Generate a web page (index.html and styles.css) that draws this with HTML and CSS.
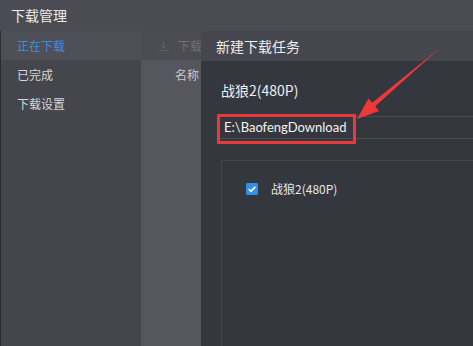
FILE: index.html
```html
<!DOCTYPE html>
<html lang="zh-CN">
<head>
<meta charset="utf-8">
<title>下载管理</title>
<link rel="stylesheet" href="styles.css">
</head>
<body>
<div class="app">
  <div class="titlebar">下载管理</div>
  <div class="main">
    <div class="sidebar">
      <div class="nav-item active">正在下载</div>
      <div class="nav-item">已完成</div>
      <div class="nav-item">下载设置</div>
    </div>
    <div class="midcol">
      <div class="mid-head">
        <svg class="dl-icon" width="11" height="10" viewBox="0 0 11 10"><path d="M5.5 0 V7 M2.5 4.5 L5.5 7.5 L8.5 4.5 M0.5 9.5 H10.5" fill="none" stroke="#5f6068" stroke-width="1"/></svg>
        <span>下载</span>
      </div>
      <div class="mid-row">名称</div>
    </div>
    <div class="dialog">
      <div class="dialog-head">新建下载任务</div>
      <div class="dialog-body">
        <div class="task-name">战狼2(480P)</div>
        <div class="path-input">E:\BaofengDownload<span class="mark"></span></div>
        <div class="file-panel">
          <label class="file-item"><span class="check"><svg width="12" height="12" viewBox="0 0 12 12"><path d="M2.8 6.2 L5 8.3 L9.3 3.8" fill="none" stroke="#fff" stroke-width="1.7"/></svg></span><span>战狼2(480P)</span></label>
        </div>
      </div>
    </div>
  </div>
  <svg class="arrow" width="473" height="346" viewBox="0 0 473 346"><polygon points="357,119 368.5,98.6 372.2,102.8 440.5,47.5 375.2,106.3 379,111" fill="#f0383a"/></svg>
</div>
</body>
</html>
```

FILE: styles.css
```css
html, body {
  margin: 0;
  padding: 0;
  background: #35373f;
}
body {
  font-family: "Noto Sans CJK SC", "Noto Sans", sans-serif;
  width: 473px;
  height: 346px;
  overflow: hidden;
}
.app {
  position: relative;
  width: 473px;
  height: 346px;
  overflow: hidden;
  display: flex;
  flex-direction: column;
}
.titlebar {
  height: 31px;
  flex: none;
  background: #4b4b53;
  color: #ececec;
  font-size: 14px;
  line-height: 30px;
  padding-left: 11px;
  box-sizing: border-box;
}
.main {
  flex: 1;
  display: flex;
  min-height: 0;
}
.sidebar {
  width: 141px;
  flex: none;
  background: #45454e;
  border-left: 1px solid #2c2c31;
  box-sizing: border-box;
}
.nav-item {
  height: 29px;
  line-height: 29px;
  font-size: 12px;
  color: #d6d6d8;
  padding-left: 16px;
}
.nav-item.active {
  background: #4e4f57;
  color: #3a8ee0;
}
.midcol {
  width: 60px;
  flex: none;
  display: flex;
  flex-direction: column;
  background: #56565e;
}
.mid-head {
  height: 29px;
  flex: none;
  background: #4c4c55;
  display: flex;
  align-items: center;
  padding-left: 17px;
  gap: 9px;
  font-size: 12px;
  color: #6e6f77;
  white-space: nowrap;
  overflow: hidden;
}
.dl-icon {
  flex: none;
}
.mid-row {
  height: 30px;
  line-height: 30px;
  font-size: 12px;
  color: #c8c8cc;
  padding-left: 34px;
  white-space: nowrap;
  overflow: hidden;
}
.dialog {
  flex: 1;
  display: flex;
  flex-direction: column;
  background: #35373f;
  min-width: 0;
}
.dialog-head {
  height: 30px;
  flex: none;
  background: #45464e;
  color: #eeeeee;
  font-size: 14px;
  line-height: 30px;
  padding-left: 15px;
  box-sizing: border-box;
}
.dialog-body {
  flex: 1;
  padding: 19px 0 0 20px;
  display: flex;
  flex-direction: column;
}
.task-name {
  font-size: 14px;
  line-height: 20px;
  color: #f0f0f0;
}
.path-input {
  position: relative;
  margin: 16px 0 0 -3px;
  height: 23px;
  border-top: 1px solid #4b4d56;
  border-bottom: 1px solid #4b4d56;
  box-sizing: border-box;
  font-family: "Lato", "Noto Sans", sans-serif;
  font-size: 13px;
  line-height: 21px;
  color: #f2f2f2;
  padding-left: 6px;
  margin-right: -20px;
}
.mark {
  position: absolute;
  left: -1px;
  top: -3px;
  width: 139px;
  height: 30px;
  border: 3px solid #e83a3b;
  box-sizing: border-box;
}
.file-panel {
  margin-top: 21px;
  flex: 1;
  border-top: 1px solid #45474f;
  border-left: 1px solid #45474f;
  padding: 21px 0 0 24px;
}
.file-item {
  display: flex;
  align-items: center;
  gap: 13px;
  font-size: 12px;
  color: #e6e6e8;
  line-height: 14px;
}
.check {
  width: 12px;
  height: 12px;
  background: #2f8fea;
  border-radius: 1px;
  display: block;
}
.check svg {
  display: block;
}
.arrow {
  position: absolute;
  left: 0;
  top: 0;
  pointer-events: none;
}
```
